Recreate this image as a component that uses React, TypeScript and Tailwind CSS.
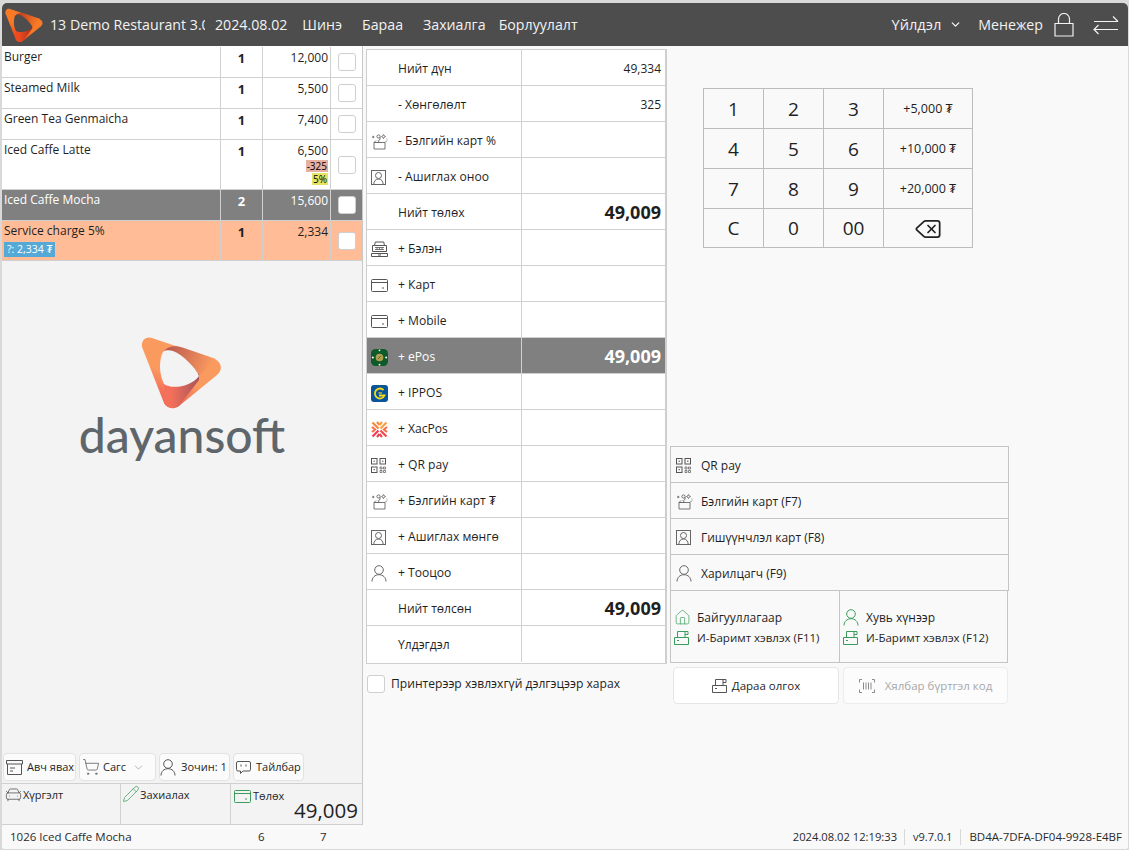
import { ChevronDown, ShoppingCart, Pencil, CarFront, Delete, Home } from "lucide-react";
import type { ReactNode } from "react";

function CardIcon({ className = "text-[#555]" }: { className?: string }) {
  return (
    <svg width="17" height="13" viewBox="0 0 17 13" fill="none" stroke="currentColor" className={`shrink-0 ${className}`}>
      <rect x="0.5" y="0.5" width="16" height="12" rx="1" />
      <path d="M0.5 3.5h16M11 9h2" />
    </svg>
  );
}

function GiftIcon() {
  return (
    <svg width="17" height="17" viewBox="0 0 17 17" fill="none" stroke="#666" strokeWidth="0.9" className="shrink-0">
      <path d="M3 9.500h11v6.500h-11zM3 9.500l5 0M3 9.500l2-2M14 9.500l2-2M8.500 9.500l-1.500-2" />
      <circle cx="7.500" cy="3.500" r="1.600" />
      <path d="M9 4v2.500l-1.500 1M12.500 1.500l.8 1.400 1.200.6-1.200.6-.8 1.400-.8-1.400-1.200-.6 1.200-.6zM1 4h2.400M2.200 2.800v2.400M15.500 6h.8" />
    </svg>
  );
}

function FrameIcon() {
  return (
    <svg width="15" height="15" viewBox="0 0 15 15" fill="none" stroke="#666" className="shrink-0">
      <rect x="0.5" y="0.5" width="14" height="14" />
      <circle cx="7.500" cy="5.500" r="3" />
      <path d="M2.800 14.500c0-3.200 1.800-5.500 4.700-5.500s4.700 2.300 4.700 5.500" />
    </svg>
  );
}

function PersonIcon({ className = "text-[#666]" }: { className?: string }) {
  return (
    <svg width="16" height="17" viewBox="0 0 16 17" fill="none" stroke="currentColor" className={`shrink-0 ${className}`}>
      <circle cx="8" cy="5" r="4.300" />
      <path d="M1 16.500c0-4 3-6.800 7-6.800s7 2.800 7 6.800" />
    </svg>
  );
}

function QrIcon() {
  return (
    <svg width="15" height="15" viewBox="0 0 15 15" fill="none" stroke="#555" className="shrink-0">
      <rect x="0.500" y="0.500" width="5.500" height="5.500" />
      <rect x="9" y="0.500" width="5.500" height="5.500" />
      <rect x="0.500" y="9" width="5.500" height="5.500" />
      <path d="M2.500 3.200h1.500M11 3.200h1.500M2.500 11.700h1.500" />
      <path d="M9 9h2v2h-2zM12.500 9h2v2h-2zM9 12.500h2v2h-2zM12.500 12.500h2v2h-2z" strokeWidth="0.700" />
    </svg>
  );
}

function CashIcon() {
  return (
    <svg width="17" height="16" viewBox="0 0 17 16" fill="none" stroke="#555" className="shrink-0">
      <path d="M3.500 4.500l.8-3.500h8.400l.8 3.500M1.500 4.500h14v6h-14zM.5 12.500h16v3h-16zM7 14h3" />
      <path d="M4 6.500h9M4 8.500h9M6 6.500v2M8.500 6.500v2M11 6.500v2" strokeWidth="0.800" />
    </svg>
  );
}

function PrinterIcon({ className = "text-[#555]" }: { className?: string }) {
  return (
    <svg width="15" height="14" viewBox="0 0 15 14" fill="none" stroke="currentColor" className={`shrink-0 ${className}`}>
      <path d="M3.500 6V.5h7.500v5.500M.5 6.500h14v7H.5zM3 9.500h2M11 .5h3v3h-3" />
    </svg>
  );
}

function BoxIcon() {
  return (
    <svg width="17" height="15" viewBox="0 0 17 15" fill="none" stroke="#555" className="shrink-0">
      <path d="M.5.500h16v3.500H.5zM1.500 4v10.500h14V4M4 8h5M4 11h3" />
    </svg>
  );
}

function BubbleIcon() {
  return (
    <svg width="15" height="13" viewBox="0 0 15 13" fill="none" stroke="#555" className="shrink-0">
      <path d="M2 .5h11a1.500 1.500 0 0 1 1.500 1.500v6.500a1.500 1.500 0 0 1-1.500 1.500H7l-2.500 2.500V10H2A1.500 1.500 0 0 1 .5 8.500V2A1.500 1.500 0 0 1 2 .5zM5 3.500v2M10 3.500v2" />
    </svg>
  );
}

function EposIcon() {
  return (
    <svg width="17" height="17" viewBox="0 0 17 17" className="shrink-0">
      <rect width="17" height="17" rx="4.500" fill="#0f5a2a" />
      <circle cx="8.500" cy="8.500" r="3.800" fill="#b0a04e" />
      <path d="M7 10l3-3" stroke="#55682f" />
      <circle cx="1.800" cy="8.500" r="1" fill="#fff" />
      <circle cx="15.200" cy="8.500" r="1" fill="#fff" />
      <circle cx="8.500" cy="1.300" r="0.900" fill="#fff" />
      <circle cx="8.500" cy="15.700" r="0.900" fill="#fff" />
    </svg>
  );
}

function IpposIcon() {
  return (
    <svg width="17" height="17" viewBox="0 0 17 17" fill="none" className="shrink-0">
      <rect width="17" height="17" rx="3" fill="#0a5499" />
      <path d="M12.500 5a5 5 0 1 0 1 5.500H8" stroke="#f6d91c" strokeWidth="1.800" />
      <path d="M11 8H7.500" stroke="#f6d91c" strokeWidth="1.200" />
    </svg>
  );
}

function XacIcon() {
  return (
    <svg width="17" height="17" viewBox="0 0 17 17" fill="none" strokeWidth="2.200" className="shrink-0">
      <path d="M1.500 1.500l6 6M6 1l2.500 3" stroke="#f6893c" />
      <path d="M15.500 1.500l-6 6M11 1l-2.500 3" stroke="#f9a03f" />
      <path d="M1.500 15.500l6-6M6 16l2.500-3" stroke="#ef3d56" />
      <path d="M15.500 15.500l-6-6M11 16l-2.500-3" stroke="#f04a50" />
      <path d="M1 6l3 2.500L1 11M16 6l-3 2.500 3 2.500" stroke="#f4704a" />
    </svg>
  );
}

function BrandMark({ width, height, id, a, b, c, band, bandEnd, hole }: {
  width: number;
  height: number;
  id: string;
  a: string;
  b: string;
  c: string;
  band: string;
  bandEnd: string;
  hole: string;
}) {
  return (
    <svg width={width} height={height} viewBox="80 10 85 76" className="block">
      <defs>
        <linearGradient id={`${id}-base`} x1="0.700" y1="0" x2="0.200" y2="1">
          <stop offset="0" stopColor={a} />
          <stop offset="0.550" stopColor={a} />
          <stop offset="0.800" stopColor={b} />
          <stop offset="1" stopColor={c} />
        </linearGradient>
        <linearGradient id={`${id}-top`} x1="0" y1="0" x2="1" y2="0.200">
          <stop offset="0" stopColor={band} />
          <stop offset="1" stopColor={a} />
        </linearGradient>
        <linearGradient id={`${id}-bot`} x1="0" y1="0" x2="1" y2="0">
          <stop offset="0.200" stopColor={b} />
          <stop offset="1" stopColor={bandEnd} />
        </linearGradient>
      </defs>
      <path d="M83 23c-1-7 4-11 10-9l62 21c8 3 9 11 3 16l-38 31c-6 4-12 2-15-3z" fill={`url(#${id}-base)`} />
      <path d="M105 27c4-5 12-6 20-3l32 11-17 17z" fill={`url(#${id}-top)`} />
      <path d="M105 60l35-10v6l-20 26c-6 4-12 2-15-3z" fill={`url(#${id}-bot)`} />
      <path d="M105 27c-3 3-4 10-4 16s2 13 4 17c6 5 26 4 35-8-4-9-16-21-26-25-3-1-7-1-9 0z" fill={hole} />
    </svg>
  );
}

const items = [
  { name: "Burger", qty: "1", price: "12,000", h: "h-[32px] pt-[1px]" },
  { name: "Steamed Milk", qty: "1", price: "5,500", h: "h-[31px]" },
  { name: "Green Tea Genmaicha", qty: "1", price: "7,400", h: "h-[31px]" },
  { name: "Iced Caffe Latte", qty: "1", price: "6,500", h: "h-[50px]", extra: true },
];

function Check() {
  return <span className="block w-[18px] h-[18px] rounded-[3px] border border-[#cfcfcf] bg-white" />;
}

function OrderRow({
  name,
  qty,
  price,
  h,
  tone = "",
  children,
  sub,
}: {
  name: string;
  qty: string;
  price: string;
  h: string;
  tone?: string;
  children?: ReactNode;
  sub?: ReactNode;
}) {
  return (
    <div className={`flex ${h} ${tone || "bg-white text-[#1f1f1f]"} border-b border-[#d0d0d0] text-xs`}>
      <div className="w-[219px] pl-[2px] pt-[2px] border-r border-[#d0d0d0] leading-4">
        <div>{name}</div>
        {sub}
      </div>
      <div className="w-[42px] border-r border-[#d0d0d0] pt-[3px] text-center text-[13px] font-bold leading-4">{qty}</div>
      <div className="w-[68px] border-r border-[#d0d0d0] pt-[3px] pr-[2px] text-right leading-4 flex flex-col items-end">
        <span>{price}</span>
        {children}
      </div>
      <div className="w-[31px] flex items-center justify-center">
        <Check />
      </div>
    </div>
  );
}

const payRows: { label: string; value?: string; icon?: ReactNode; big?: boolean; active?: boolean }[] = [
  { label: "Нийт дүн", value: "49,334" },
  { label: "- Хөнгөлөлт", value: "325" },
  { label: "- Бэлгийн карт %", icon: <GiftIcon /> },
  { label: "- Ашиглах оноо", icon: <FrameIcon /> },
  { label: "Нийт төлөх", value: "49,009", big: true },
  { label: "+ Бэлэн", icon: <CashIcon /> },
  { label: "+ Карт", icon: <CardIcon /> },
  { label: "+ Mobile", icon: <CardIcon /> },
  { label: "+ ePos", value: "49,009", big: true, active: true, icon: <EposIcon /> },
  { label: "+ IPPOS", icon: <IpposIcon /> },
  { label: "+ ХасPos", icon: <XacIcon /> },
  { label: "+ QR pay", icon: <QrIcon /> },
  { label: "+ Бэлгийн карт ₮", icon: <GiftIcon /> },
  { label: "+ Ашиглах мөнгө", icon: <FrameIcon /> },
  { label: "+ Тооцоо", icon: <PersonIcon /> },
  { label: "Нийт төлсөн", value: "49,009", big: true },
  { label: "Үлдэгдэл" },
];

const keys = [
  ["1", "2", "3", "+5,000 ₮"],
  ["4", "5", "6", "+10,000 ₮"],
  ["7", "8", "9", "+20,000 ₮"],
  ["C", "0", "00", ""],
];

const lookups = [
  { label: "QR pay", icon: <QrIcon /> },
  { label: "Бэлгийн карт (F7)", icon: <GiftIcon /> },
  { label: "Гишүүнчлэл карт (F8)", icon: <FrameIcon /> },
  { label: "Харилцагч (F9)", icon: <PersonIcon /> },
];

function ToolButton({ w, gap, icon, children }: { w: string; gap: string; icon: ReactNode; children: ReactNode }) {
  return (
    <div className={`${w} ${gap} h-[28px] flex items-center pl-[2px] rounded-[4px] border border-[#e2e2e2] bg-[#fbfbfb] text-[11px] text-[#1f1f1f] whitespace-nowrap`}>
      {icon}
      {children}
    </div>
  );
}

export default function App() {
  return (
    <div className="w-[1129px] h-[850px] pt-[3px] pl-[2px] pr-[1px] pb-[1px] bg-[#d9d9d9] overflow-hidden font-['Open_Sans','Noto_Sans',sans-serif] text-[#1f1f1f]">
      <div className="h-full flex flex-col bg-[#f9f9f9] rounded-b-[3px] overflow-hidden rounded-t-[5px]">
        <header className="h-[43px] shrink-0 bg-[#4d4d4d] flex items-center text-[#f2f2f2] text-[14.2px]">
          <div className="w-[46px] pl-[2px] pt-[1px] shrink-0">
            <BrandMark width={40} height={36} id="small" a="#f97a26" b="#ee4a1e" c="#d9381a" band="#b5341c" bandEnd="#a8301c" hole="#4d4d4d" />
          </div>
          <div className="w-[157px] pl-[2px] overflow-hidden whitespace-nowrap">13 Demo Restaurant 3.0</div>
          <div className="ml-[10px]">2024.08.02</div>
          <nav className="flex ml-[15px] gap-[20px]">
            <span>Шинэ</span>
            <span>Бараа</span>
            <span>Захиалга</span>
          </nav>
          <span className="ml-[13px]">Борлуулалт</span>
          <div className="ml-auto flex items-center">
            <span className="text-[14.6px]">Үйлдэл</span>
            <ChevronDown size={13} strokeWidth={2.500} className="ml-[8px]" />
            <span className="ml-[16px]">Менежер</span>
            <svg width="20" height="24" viewBox="0 0 20 24" fill="none" stroke="#f2f2f2" strokeWidth="1.200" className="ml-[11px]">
              <path d="M1 10.500h18v12.500H1zM4.500 10.500V6a5.500 5.500 0 0 1 11 0v4.500" />
            </svg>
            <svg width="26" height="20" viewBox="0 0 26 20" fill="none" stroke="#f2f2f2" strokeWidth="1.200" className="ml-[19px] mr-[9px]">
              <path d="M1 6.500h24M20 1.500l5 5M1 14.500h24M5.500 10L1 14.500 5.500 19" />
            </svg>
          </div>
        </header>

        <main className="flex-1 flex min-h-0">
          <section className="w-[361px] shrink-0 flex flex-col bg-[#f3f3f3] border-r border-[#c8c8c8]">
            <div className="shrink-0">
              {items.map((it) => (
                <OrderRow key={it.name} name={it.name} qty={it.qty} price={it.price} h={it.h}>
                  {it.extra && (
                    <>
                      <span className="mt-[1px] bg-[#e8b0a2] text-[10px] leading-[12px] px-[1px] text-black">-325</span>
                      <span className="mt-[1px] bg-[#e2e565] text-[10px] leading-[12px] px-[1px] text-black">5%</span>
                    </>
                  )}
                </OrderRow>
              ))}
              <OrderRow name="Iced Caffe Mocha" qty="2" price="15,600" h="h-[31px]" tone="bg-[#808080] text-white" />
              <OrderRow
                name="Service charge 5%"
                qty="1"
                price="2,334"
                h="h-[40px]"
                tone="bg-[#ffbc97] text-[#1f1f1f]"
                sub={<span className="inline-block mt-[3px] px-[3px] bg-[#55a9d6] text-white text-[10.5px] leading-[15px]">?: 2,334 ₮</span>}
              />
            </div>

            <div className="flex-1 flex flex-col items-center pt-[73px]">
              <div className="w-[85px] h-[76px] ml-[-2px]">
                <BrandMark width={85} height={76} id="big" a="#fb9a5e" b="#f4705a" c="#ee5a52" band="#b4544f" bandEnd="#a8555a" hole="#f3f3f3" />
              </div>
              <div className="mt-[2px] font-['Lato',sans-serif] font-medium text-[48px] leading-[46px] text-[#5f666b]">dayansoft</div>
            </div>

            <div className="h-[32px] shrink-0 flex items-center gap-[3px] pl-[1px]">
              <ToolButton w="w-[73px]" gap="gap-[4px]" icon={<BoxIcon />}>Авч явах</ToolButton>
              <ToolButton
                w="w-[77px]"
                gap="gap-[3px]"
                icon={<ShoppingCart size={18} strokeWidth={1} className="shrink-0 text-[#555]" />}
              >
                <span>Сагс</span>
                <ChevronDown size={13} strokeWidth={1} className="ml-[3px] text-[#777]" />
              </ToolButton>
              <ToolButton w="w-[71px]" gap="gap-[5px]" icon={<PersonIcon className="ml-[-2px] text-[#555]" />}>Зочин: 1</ToolButton>
              <ToolButton w="w-[71px]" gap="gap-[5px]" icon={<BubbleIcon />}>Тайлбар</ToolButton>
            </div>

            <div className="h-[42px] shrink-0 flex border-y border-[#d0d0d0] text-[11px]">
              <div className="w-[119px] border-r border-[#d0d0d0] pl-[2px] pt-[1px] flex items-start leading-5">
                <CarFront size={19} strokeWidth={1} className="shrink-0 text-[#555]" />
                Хүргэлт
              </div>
              <div className="w-[110px] border-r border-[#d0d0d0] pl-[1px] pt-[1px] flex items-start leading-5">
                <Pencil size={18} strokeWidth={1} className="shrink-0 text-[#3a9d5d]" />
                Захиалах
              </div>
              <div className="flex-1 pl-[3px] pt-[4px] relative leading-4">
                <span className="flex items-center gap-[2px]">
                  <CardIcon className="text-[#3a9d5d]" />
                  Төлөх
                </span>
                <span className="absolute right-[4px] bottom-0 text-[20.5px] leading-7">49,009</span>
              </div>
            </div>
          </section>

          <section className="w-[305px] shrink-0 pl-[3px] pt-[3px] flex flex-col">
            <div className="w-[301px] border-t border-l border-b border-r-2 border-[#cfcfcf] bg-white pb-[1px]">
              {payRows.map((r) => (
                <div
                  key={r.label}
                  className={`h-[36px] flex border-b last:border-b-0 border-[#d0d0d0] text-[12.1px] ${
                    r.active ? "bg-[#808080] text-white" : ""
                  }`}
                >
                  <div className="w-[155px] flex items-center pt-[3px] border-r border-[#d0d0d0]">
                    <span className="w-[31px] pl-[4px] flex justify-start shrink-0">{r.icon}</span>
                    <span>{r.label}</span>
                  </div>
                  <div className={`flex-1 flex items-center justify-end pr-[4px] ${r.big ? "pt-[1px] text-[18px] font-bold" : "pt-[3px] text-xs"}`}>
                    {r.value}
                  </div>
                </div>
              ))}
            </div>
            <div className="flex items-center mt-[11px] ml-[1px] gap-[6px] text-[12.1px]">
              <Check />
              <span>Принтерээр хэвлэхгүй дэлгэцээр харах</span>
            </div>
          </section>

          <section className="flex-1 flex flex-col">
            <div className="mt-[42px] ml-[35px] w-[270px] grid grid-cols-[60px_60px_60px_89px] border-t border-l border-[#bdbdbd]">
              {keys.flat().map((k, i) => (
                <div
                  key={i}
                  className={`${i > 11 ? "h-[39px]" : "h-[40px]"} pt-[1px] flex items-center justify-center border-r border-b border-[#bdbdbd] ${
                    i % 4 === 3 ? "text-[12.5px]" : "text-[19px]"
                  }`}
                >
                  {k === "" ? <Delete size={28} strokeWidth={1.500} className="text-[#222]" /> : k}
                </div>
              ))}
            </div>

            <div className="mt-[198px] ml-[2px] w-[339px] flex flex-col text-xs">
              <div className="border-t border-l border-r border-[#c4c4c4]">
                {lookups.map((l) => (
                  <div key={l.label} className="h-[36px] pt-[2px] flex items-center border-b border-[#c4c4c4]">
                    <span className="w-[30px] pl-[5px] shrink-0 flex">{l.icon}</span>
                    <span>{l.label}</span>
                  </div>
                ))}
              </div>
              <div className="h-[72px] w-[338px] flex border-l border-r border-b border-[#c4c4c4]">
                <div className="w-[169px] border-r border-[#c4c4c4] pt-[18px] pl-[3px] flex flex-col gap-[4px]">
                  <div className="flex items-center gap-[6px]">
                    <Home size={17} strokeWidth={1} className="shrink-0 text-[#3a9d5d]" />
                    Байгууллагаар
                  </div>
                  <div className="flex items-center gap-[8px] text-[11.5px]">
                    <PrinterIcon className="text-[#3a9d5d]" />
                    И-Баримт хэвлэх (F11)
                  </div>
                </div>
                <div className="flex-1 pt-[18px] pl-[3px] flex flex-col gap-[4px]">
                  <div className="flex items-center gap-[7px]">
                    <PersonIcon className="text-[#3a9d5d]" />
                    Хувь хүнээр
                  </div>
                  <div className="flex items-center gap-[8px] text-[11.5px]">
                    <PrinterIcon className="text-[#3a9d5d]" />
                    И-Баримт хэвлэх (F12)
                  </div>
                </div>
              </div>
              <div className="mt-[4px] ml-[3px] flex gap-[4px] text-[11.5px]">
                <div className="w-[166px] h-[37px] rounded-[4px] border border-[#e6e6e6] bg-white flex items-center justify-center gap-[5px]">
                  <PrinterIcon />
                  Дараа олгох
                </div>
                <div className="w-[165px] h-[37px] rounded-[4px] border border-[#ececec] bg-[#fcfcfc] flex items-center justify-center gap-[10px] text-[#a8a8a8]">
                  <svg width="16" height="14" viewBox="0 0 16 14" fill="none" stroke="#8a8a8a" className="shrink-0">
                    <path d="M3 .5H.5v3M13 .5h2.500v3M3 13.500H.5v-3M13 13.500h2.500v-3M4.500 3.500v7M7 3.500v7M9.500 3.500v7M12 3.500v7" />
                  </svg>
                  Хялбар бүртгэл код
                </div>
              </div>
            </div>
          </section>
        </main>

        <footer className="h-[24px] shrink-0 flex items-center text-[11.5px] text-[#2a2a2a] bg-[#f9f9f9]">
          <span className="w-[256px] pl-[8px]">1026 Iced Caffe Mocha</span>
          <span className="w-[62px]">6</span>
          <span>7</span>
          <div className="ml-auto flex items-center pr-[6px] h-[18px]">
            <span className="pr-[7px] border-r border-[#d8d8d8] text-[11.2px]">2024.08.02 12:19:33</span>
            <span className="px-[8px] border-r border-[#d8d8d8] text-[11px]">v9.7.0.1</span>
            <span className="pl-[8px]">BD4A-7DFA-DF04-9928-E4BF</span>
          </div>
        </footer>
      </div>
    </div>
  );
}
